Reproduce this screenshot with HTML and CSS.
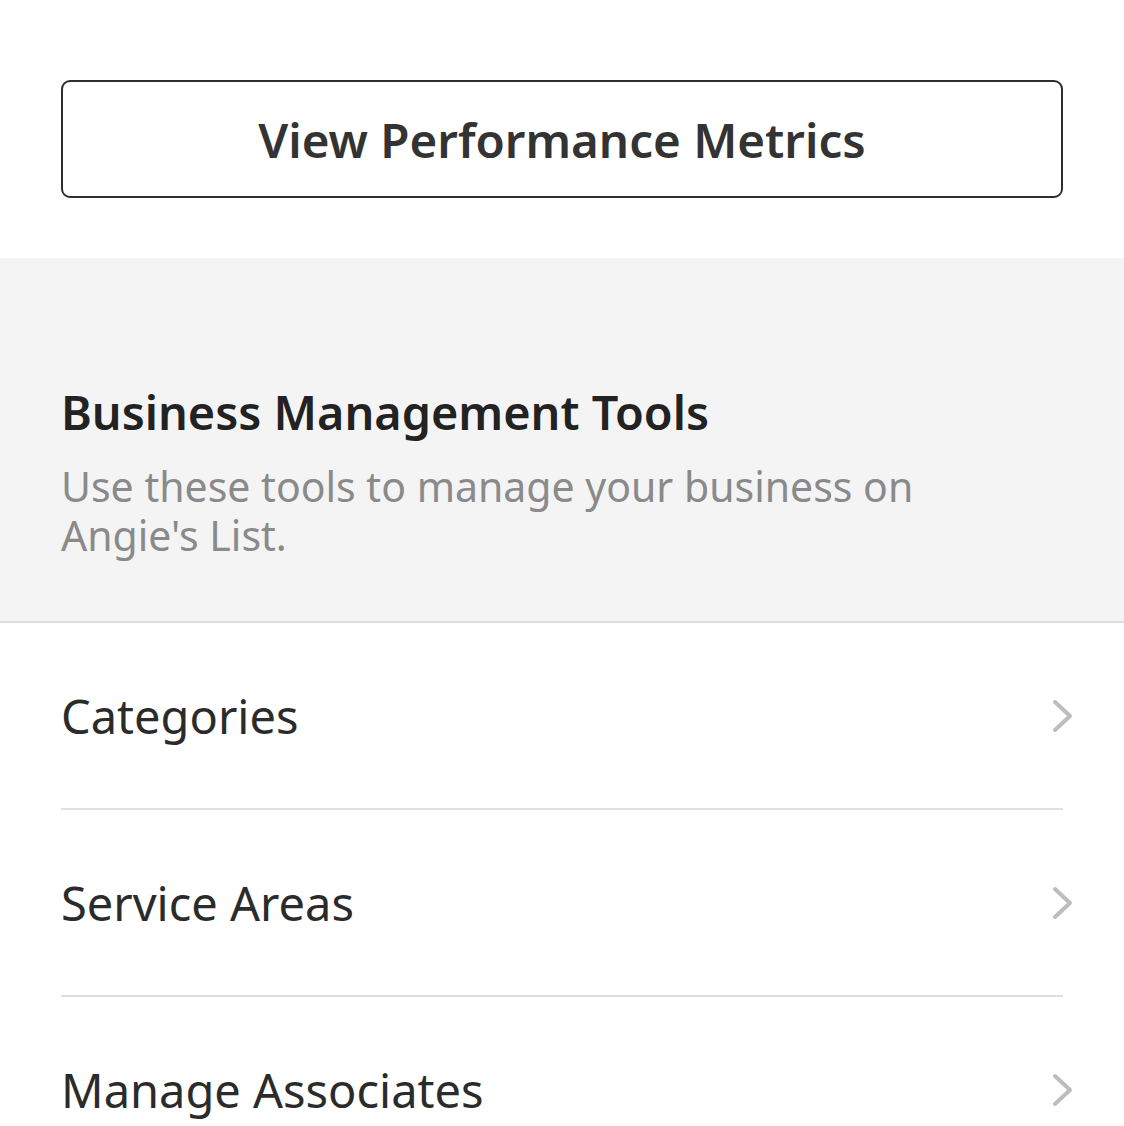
FILE: index.html
```html
<!DOCTYPE html>
<html lang="en">
  <head>
    <meta charset="UTF-8" />
    <meta name="viewport" content="width=device-width, initial-scale=1.0" />
    <title>Business Tools</title>
    <link rel="stylesheet" href="styles.css">
  </head>
  <body>
    <div class="top_area">
      <a href="#" class="btn_metrics">View Performance Metrics</a>
    </div>
    <section class="tools_head">
      <h2>Business Management Tools</h2>
      <p>Use these tools to manage your business on Angie's List.</p>
    </section>
    <ul class="tool_list">
      <li>
        <a href="#">
          <span>Categories</span>
          <svg class="chevron" viewBox="0 0 24 34" width="24" height="34"><path d="M4 3 L19 17 L4 31" /></svg>
        </a>
      </li>
      <li>
        <a href="#">
          <span>Service Areas</span>
          <svg class="chevron" viewBox="0 0 24 34" width="24" height="34"><path d="M4 3 L19 17 L4 31" /></svg>
        </a>
      </li>
      <li>
        <a href="#">
          <span>Manage Associates</span>
          <svg class="chevron" viewBox="0 0 24 34" width="24" height="34"><path d="M4 3 L19 17 L4 31" /></svg>
        </a>
      </li>
    </ul>
  </body>
</html>
```

FILE: styles.css
```css
* {
  margin: 0;
  padding: 0;
  box-sizing: border-box;
}
body {
  font-family: "Noto Sans", "Open Sans", sans-serif;
  color: #2b2b2b;
  background-color: #fff;
  overflow: hidden;
}
.top_area {
  padding: 80px 61px 60px;
}
.btn_metrics {
  display: flex;
  justify-content: center;
  align-items: center;
  height: 118px;
  border: 2px solid #2e2e2e;
  border-radius: 9px;
  font-size: 47.5px;
  font-weight: 600;
  color: #333;
  text-decoration: none;
}
.tools_head {
  background-color: #f4f4f4;
  border-bottom: 2px solid #dedede;
  padding: 122px 61px 61px;
}
.tools_head h2 {
  font-size: 46.8px;
  font-weight: 600;
  line-height: 64px;
  color: #222;
}
.tools_head p {
  margin-top: 18px;
  font-size: 41px;
  line-height: 49px;
  color: #8a8a8a;
  max-width: 900px;
}
.tool_list {
  list-style: none;
  padding: 0 61px;
}
.tool_list li {
  border-bottom: 2px solid #e0e0e0;
}
.tool_list a {
  display: flex;
  justify-content: space-between;
  align-items: center;
  height: 185px;
  font-size: 47px;
  color: #2b2b2b;
  text-decoration: none;
}
.chevron {
  margin-right: -12px;
  fill: none;
  stroke: #bdbdbd;
  stroke-width: 4;
  stroke-linecap: round;
  stroke-linejoin: round;
}
```
